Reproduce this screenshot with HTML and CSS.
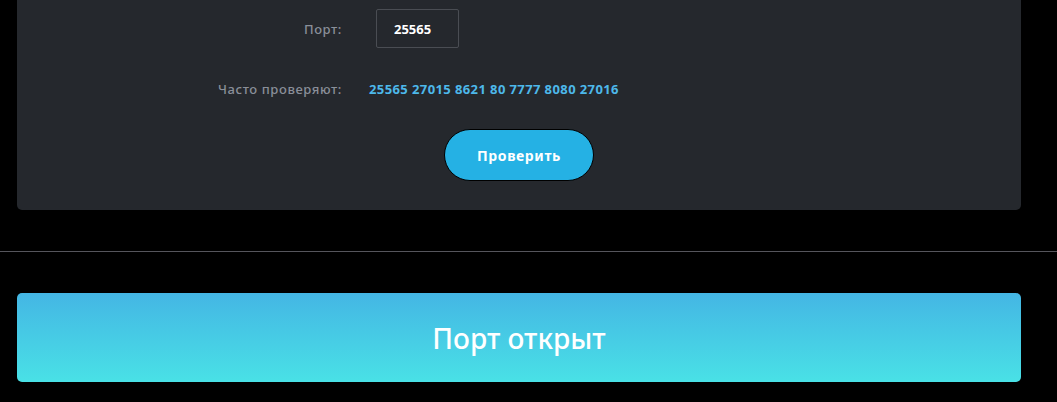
FILE: index.html
```html
<!DOCTYPE html>
<html lang="ru">
<head>
    <meta charset="UTF-8">
    <meta name="viewport" content="width=device-width, initial-scale=1.0">
    <title>Проверка порта</title>
    <link rel="stylesheet" href="styles.css">
</head>
<body>
    <!-- Port check form -->
    <div class="check-card">
        <div class="form-row">
            <label for="port" class="form-label">Порт:</label>
            <input type="text" id="port" class="port-input" value="25565">
        </div>

        <div class="form-row popular-row">
            <span class="form-label">Часто проверяют:</span>
            <div class="popular-ports">25565 27015 8621 80 7777 8080 27016</div>
        </div>

        <div class="button-row">
            <button class="check-button">Проверить</button>
        </div>
    </div>

    <hr class="divider">

    <!-- Result -->
    <div class="result-box">Порт открыт</div>
</body>
</html>
```

FILE: styles.css
```css
body {
    margin: 0;
    background-color: #000;
    font-family: 'Noto Sans', 'DejaVu Sans', sans-serif;
    padding: 0 36px 20px 17px;
}

.check-card {
    background-color: #25282d;
    border-radius: 0 0 5px 5px;
    padding: 9px 0 29px;
}

.form-row {
    display: flex;
    align-items: center;
}

.form-label {
    width: 325px;
    text-align: right;
    color: #8a8f99;
    font-size: 13px;
    font-weight: 500;
    letter-spacing: 0.6px;
}

.port-input {
    margin-left: 34px;
    width: 83px;
    height: 39px;
    box-sizing: border-box;
    background-color: transparent;
    border: 1px solid #4a4d53;
    border-radius: 2px;
    color: #fff;
    font-family: inherit;
    font-size: 13px;
    font-weight: 700;
    padding: 0 0 0 17px;
    outline: none;
}

.popular-row {
    margin-top: 32px;
}

.popular-ports {
    margin-left: 27px;
    color: #4db8ea;
    font-size: 13px;
    font-weight: 700;
    letter-spacing: 0.4px;
}

.button-row {
    display: flex;
    justify-content: center;
    margin-top: 31px;
}

.check-button {
    width: 150px;
    height: 52px;
    background-color: #25b1e4;
    border: 1px solid #000;
    border-radius: 26px;
    color: #fff;
    font-family: inherit;
    font-size: 14px;
    font-weight: 700;
    letter-spacing: 0.6px;
    cursor: pointer;
}

.divider {
    margin: 41px -36px 0 -17px;
    border: none;
    border-top: 1px solid #55555c;
}

.result-box {
    margin-top: 41px;
    height: 89px;
    border-radius: 5px;
    background: linear-gradient(to bottom, #44b6e4, #49e1e6);
    color: #fff;
    font-size: 28px;
    font-weight: 500;
    display: flex;
    align-items: center;
    justify-content: center;
}
```
